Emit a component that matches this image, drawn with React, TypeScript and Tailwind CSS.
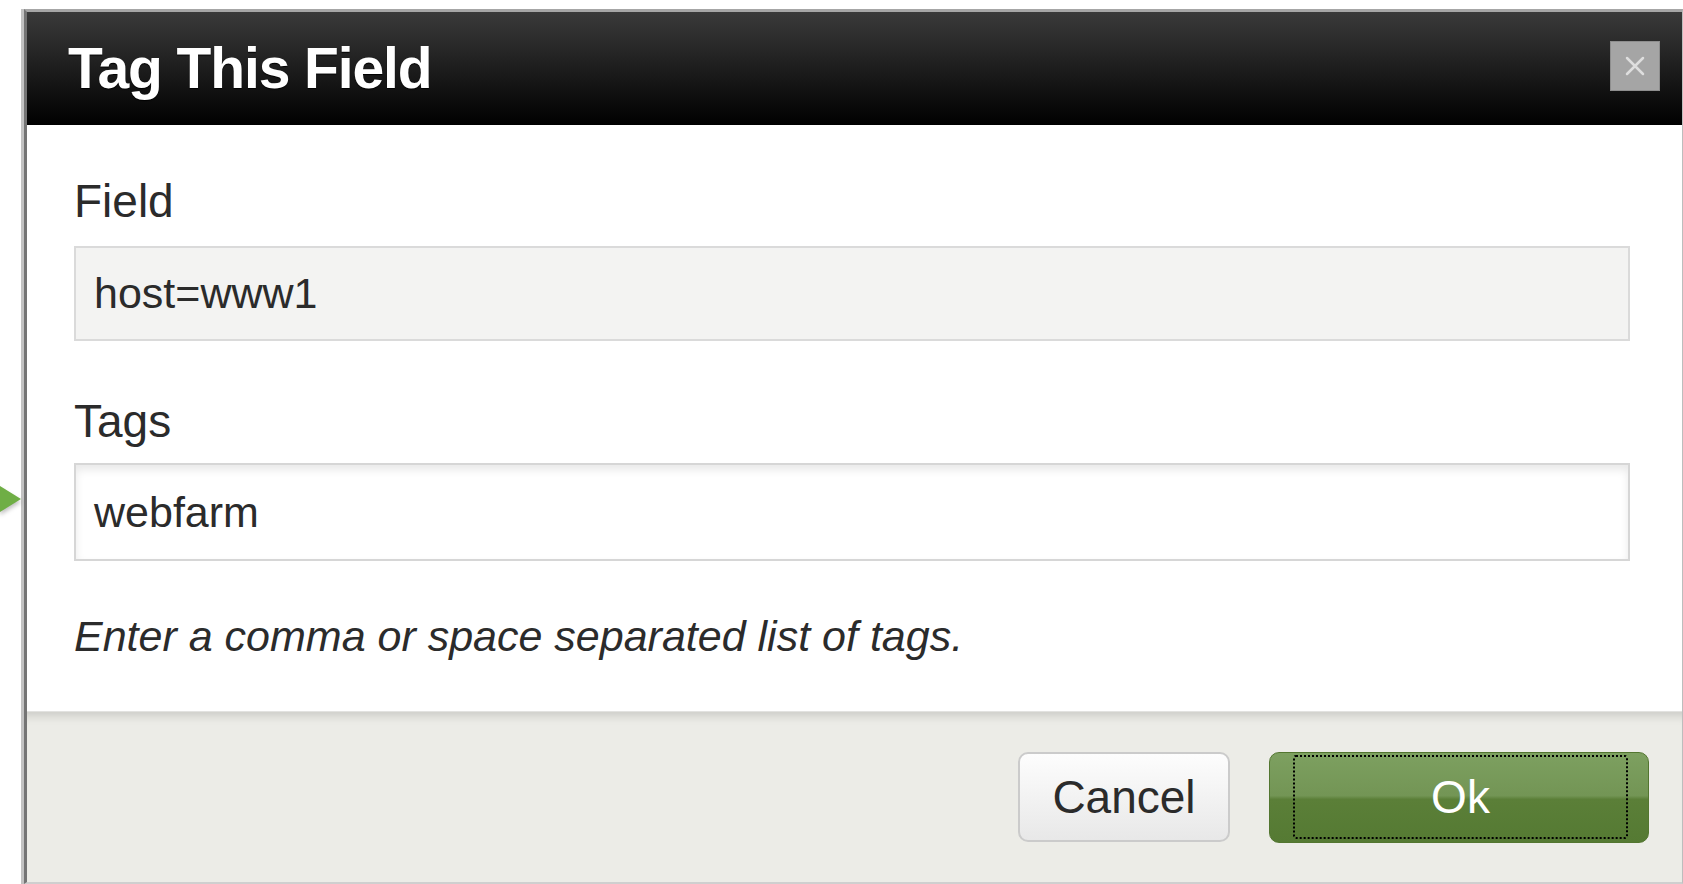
const font = { fontFamily: '"Liberation Sans", Arial, Helvetica, sans-serif' }

function CloseIcon() {
    return (
        <svg width="22" height="22" viewBox="0 0 22 22">
            <path d="M3 3 L19 19 M19 3 L3 19" stroke="#dedede" strokeWidth="2.5" strokeLinecap="round" />
        </svg>
    )
}

export default function App() {
    return (
        <div className="relative w-full h-[884px] bg-white overflow-hidden" style={font}>
            {/* green pointer from the field list */}
            <div className="absolute left-0 top-[486px] w-0 h-0 border-y-[13px] border-y-transparent border-l-[21px] border-l-[#6fae45] drop-shadow-[0_3px_2px_rgba(0,0,0,0.25)]" />

            <div className="pl-[21px] pt-[9px]">
                <div className="border-l-[3px] border-[#c2c2c2]">
                    <div className="flex flex-col h-[875px] border-l-[3px] border-l-[#747474] border-t-[3px] border-t-[#a6a6a6] border-r border-r-[#bdbdbd] border-b-2 border-b-[#cfcfcf]">
                        {/* header */}
                        <div className="flex items-center justify-between h-[113px] bg-[linear-gradient(to_bottom,#3a3a3a,#000000)] pl-[41px] pr-[22px]">
                            <h1 className="text-[57px] font-bold text-white tracking-[-1.1px] [text-shadow:0_1px_1px_#000]">
                                Tag This Field
                            </h1>
                            <button className="w-[50px] h-[50px] mt-[-6px] bg-[#a5a5a5] border border-[#8e8e8e] flex items-center justify-center">
                                <CloseIcon />
                            </button>
                        </div>

                        {/* form body */}
                        <div className="flex flex-col pl-[47px] pr-[52px] pt-[51px] pb-[50px] bg-white text-[#2b2b2b]">
                            <label className="text-[46px] leading-[50px]">Field</label>
                            <div className="mt-[20px] h-[95px] flex items-center pl-[18px] bg-[#f3f3f2] border-2 border-[#dadada] text-[43px]">
                                host=www1
                            </div>

                            <label className="mt-[55px] text-[46px] leading-[50px]">Tags</label>
                            <div className="mt-[17px] h-[98px] flex items-center pl-[18px] bg-white border-2 border-[#d6d6d6] shadow-[inset_0_5px_8px_rgba(0,0,0,0.09)] text-[43px]">
                                webfarm
                            </div>

                            <p className="mt-[50px] text-[43px] leading-[50px] italic">
                                Enter a comma or space separated list of tags.
                            </p>
                        </div>

                        {/* footer */}
                        <div className="flex-1 flex items-start justify-end gap-[39px] pt-[40px] pr-[33px] bg-[#ecece7] border-t border-[#e2e2e0] shadow-[inset_0_12px_10px_-8px_rgba(0,0,0,0.14)]">
                            <button className="w-[212px] h-[90px] rounded-[10px] border-2 border-[#cbcbcb] bg-[linear-gradient(to_bottom,#fdfdfd,#e8e8e8)] text-[46px] text-[#2b2b2b]">
                                Cancel
                            </button>
                            <button className="w-[380px] h-[91px] rounded-[10px] border border-[#537630] bg-[linear-gradient(to_bottom,#7da060_0%,#739555_48%,#5b7f38_52%,#557a33_100%)] flex pl-[23px] pr-[20px] pt-[2px] pb-[3px]">
                                <span className="flex-1 flex items-center justify-center border-2 border-dotted border-black rounded-[3px] text-[46px] text-white">
                                    Ok
                                </span>
                            </button>
                        </div>
                    </div>
                </div>
            </div>
        </div>
    )
}
